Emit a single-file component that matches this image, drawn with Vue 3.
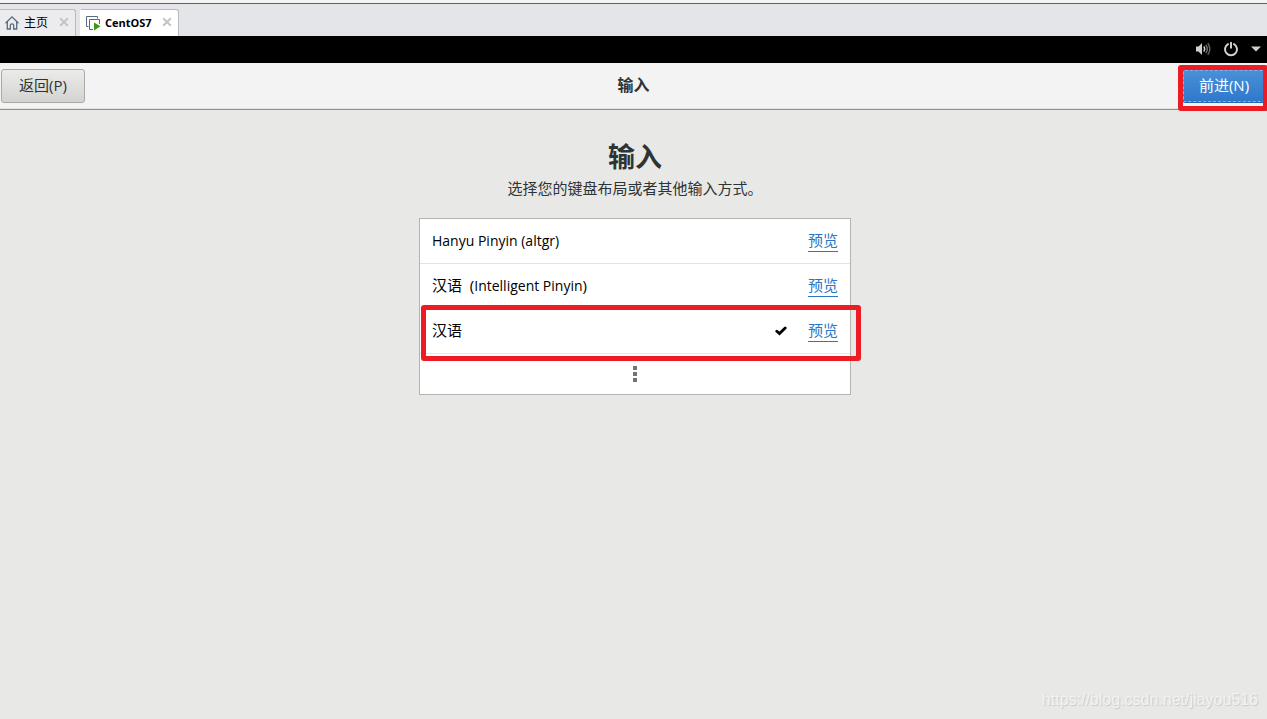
<script setup>
const layouts = [
  { local: '', latin: 'Hanyu Pinyin (altgr)', selected: false },
  { local: '汉语  (', latin: 'Intelligent Pinyin', close: ')', selected: false },
  { local: '汉语', latin: '', selected: true },
]
</script>

<template>
  <div class="screen">
    <nav class="tabs">
      <div class="tab home">
        <svg class="tab-icon" viewBox="0 0 16 16" width="16" height="16" fill="none" stroke="#566b7c" stroke-width="1.3">
          <path d="M1.5 8.2 8 1.8l6.5 6.4" />
          <path d="M3.3 7v7h3v-3.4a1.7 1.7 0 0 1 3.4 0V14h3V7" />
        </svg>
        <a href="#" class="tab-name">主页</a>
        <button class="close" aria-label="关闭主页">
          <svg viewBox="0 0 10 10" width="10" height="10" stroke="#c2c3c5" stroke-width="2"><path d="M1.2 1.2l7.6 7.6M8.8 1.2 1.2 8.8" /></svg>
        </button>
      </div>
      <div class="tab vm">
        <svg class="tab-icon" viewBox="0 0 16 16" width="16" height="16">
          <path d="M3.5 11.5H1.5V1.5H12.5V3.5" fill="none" stroke="#566b7c" />
          <path d="M8 14.5H4.5V4.5H14.5V9" fill="none" stroke="#566b7c" />
          <path d="M9 7.5 15.5 11.3 9 15.5z" fill="#3c9a0c" />
        </svg>
        <a href="#" class="tab-name">CentOS7</a>
        <button class="close" aria-label="关闭 CentOS7">
          <svg viewBox="0 0 10 10" width="10" height="10" stroke="#c2c3c5" stroke-width="2"><path d="M1.2 1.2l7.6 7.6M8.8 1.2 1.2 8.8" /></svg>
        </button>
      </div>
    </nav>

    <div class="status">
      <svg viewBox="0 0 16 16" width="16" height="16" fill="none">
        <path d="M1 5.5h2.5L7 2v12l-3.5-3.500H1z" fill="#d0d0cc" />
        <path d="M8.8 5.5q1.8 2.500 0 5" stroke="#d0d0cc" stroke-width="1.4" />
        <path d="M10.8 3.8q3 4.200 0 8.400" stroke="#777" stroke-width="1.4" />
        <path d="M12.8 2.200q4 5.800 0 11.600" stroke="#666" stroke-width="1.4" />
      </svg>
      <svg viewBox="0 0 16 16" width="16" height="16" fill="none" stroke="#d0d0cc" stroke-width="2" stroke-linecap="round">
        <path d="M5 3.1a6 6 0 1 0 6 0M8 1.8v5" />
      </svg>
      <svg viewBox="0 0 10 6" width="10" height="6"><path d="M0 .5h10L5 5.5z" fill="#d0d0cc" /></svg>
    </div>

    <header class="bar">
      <button class="btn back">返回(P)</button>
      <strong class="bar-title">输入</strong>
      <div class="next-wrap">
        <button class="btn next">前进(N)</button>
        <span class="mark mark-next"></span>
      </div>
    </header>

    <main class="content">
      <h1>输入</h1>
      <p>选择您的键盘布局或者其他输入方式。</p>
      <ul class="list">
        <li v-for="l in layouts" :key="l.local + l.latin" class="row">
          <span class="name">{{ l.local }}<span class="latin">{{ l.latin }}</span>{{ l.close }}</span>
          <svg v-if="l.selected" class="check" viewBox="0 0 12 10" width="12" height="10">
            <path d="M1.8 5.2 4.5 7.6 10.2 2" fill="none" stroke="#000" stroke-width="2.8" stroke-linecap="round" />
          </svg>
          <a href="#" class="preview">预览</a>
          <span v-if="l.selected" class="mark mark-row"></span>
        </li>
        <li class="more">
          <button class="more-btn" aria-label="更多">
            <svg viewBox="0 0 4 16" width="4" height="16" fill="#737373">
              <rect width="4" height="4" /><rect y="6" width="4" height="4" /><rect y="12" width="4" height="4" />
            </svg>
          </button>
        </li>
      </ul>
    </main>

    <div class="watermark">https://blog.csdn.net/jiayou516</div>
  </div>
</template>

<style>
body {
  margin: 0;
}
</style>

<style scoped>
.screen {
  min-height: 100vh;
  display: flex;
  flex-direction: column;
  position: relative;
  overflow: hidden;
  background: #e8e8e6;
  color: #2e3436;
  font: 15px/20px "Open Sans", "Noto Sans CJK SC", sans-serif;
}
button {
  font: inherit;
  color: inherit;
  padding: 0;
  border: 0;
  background: none;
}
.tabs {
  display: flex;
  align-items: flex-end;
  gap: 4px;
  height: 32px;
  margin-top: 3px;
  border-top: 1px solid #5f6062;
  background: #e4e5e8;
  box-shadow: 0 -3px #f4f4f5;
}
.tab {
  box-sizing: border-box;
  height: 27px;
  display: flex;
  align-items: center;
  border: 1px solid #b9babd;
  border-bottom: 0;
  border-radius: 0 3px 0 0;
  color: #000;
}
.home {
  width: 76px;
  padding-left: 4px;
  border-left: 0;
  background: #ececee;
}
.vm {
  width: 99px;
  padding-left: 4px;
  border-left-color: #fff;
  background: #fff;
}
.tab-icon {
  flex: none;
}
.tab-name {
  color: inherit;
  text-decoration: none;
  font-size: 12px;
  margin-left: 4px;
  white-space: nowrap;
}
.vm .tab-name {
  font-weight: 700;
  font-size: 11px;
}
.close {
  display: flex;
  margin: 0 6px 2px auto;
}
.status {
  box-sizing: border-box;
  height: 27px;
  background: #000;
  display: flex;
  align-items: center;
  justify-content: flex-end;
  gap: 12px;
  padding: 0 6px 2px 0;
}
.bar {
  box-sizing: border-box;
  height: 47px;
  display: grid;
  grid-template-columns: 1fr auto 1fr;
  align-items: center;
  padding: 0 1px;
  background: #f3f3f3;
  border-bottom: 1px solid #8f908d;
  box-shadow: inset 0 -1px #e2e2e0;
}
.bar-title {
  font-size: 16px;
  font-weight: 700;
  padding-bottom: 2px;
}
.btn {
  box-sizing: border-box;
  height: 34px;
  width: 84px;
  padding-bottom: 2px;
  border-radius: 3px;
}
.back {
  border: 1px solid #a9aaa7;
  background: linear-gradient(#ebebe9, #d3d3d0);
}
.next-wrap {
  justify-self: end;
  position: relative;
  display: flex;
}
.next {
  color: #fff;
  border: 1px solid #2868b4;
  background: linear-gradient(#4a90d9, #2f78ca);
  outline: 1px dashed #86b2e2;
  outline-offset: -2px;
}
.mark {
  position: absolute;
  border: 5px solid #ed1c24;
  border-radius: 3px;
  pointer-events: none;
}
.mark-next {
  inset: -4px -2px -8px -4px;
}
.mark-row {
  inset: -4px -11px -8px 1px;
}
.content {
  flex: 1;
  display: flex;
  flex-direction: column;
  align-items: center;
  padding: 29px 0 0 3px;
}
h1 {
  margin: 0;
  font-size: 27px;
  line-height: 36px;
  font-weight: 700;
}
p {
  margin: 3px 0 20px;
}
.list {
  box-sizing: border-box;
  width: 432px;
  max-width: 100%;
  margin: 0;
  padding: 0;
  list-style: none;
  border: 1px solid #b3b3b0;
  background: #fff;
  color: #000;
}
.row {
  position: relative;
  display: flex;
  align-items: center;
  height: 44px;
  padding: 0 12px;
  border-bottom: 1px solid #e4e4e2;
}
.name {
  flex: 1;
  white-space: pre;
  padding-bottom: 2px;
}
.latin {
  font-size: 14px;
}
.check {
  margin-right: 21px;
}
.preview {
  color: #2a76c6;
  text-decoration: none;
  line-height: 18px;
  padding-bottom: 2px;
  border-bottom: 1px solid #2a76c6;
}
.more {
  display: flex;
  justify-content: center;
}
.more-btn {
  display: flex;
  padding: 12px 20px;
}
.watermark {
  position: absolute;
  right: 9px;
  bottom: 9px;
  color: #f3f3f2;
  text-shadow: 1px 1px 1px #c9c9c7;
  font: 16px/20px "Liberation Sans", sans-serif;
}
</style>
